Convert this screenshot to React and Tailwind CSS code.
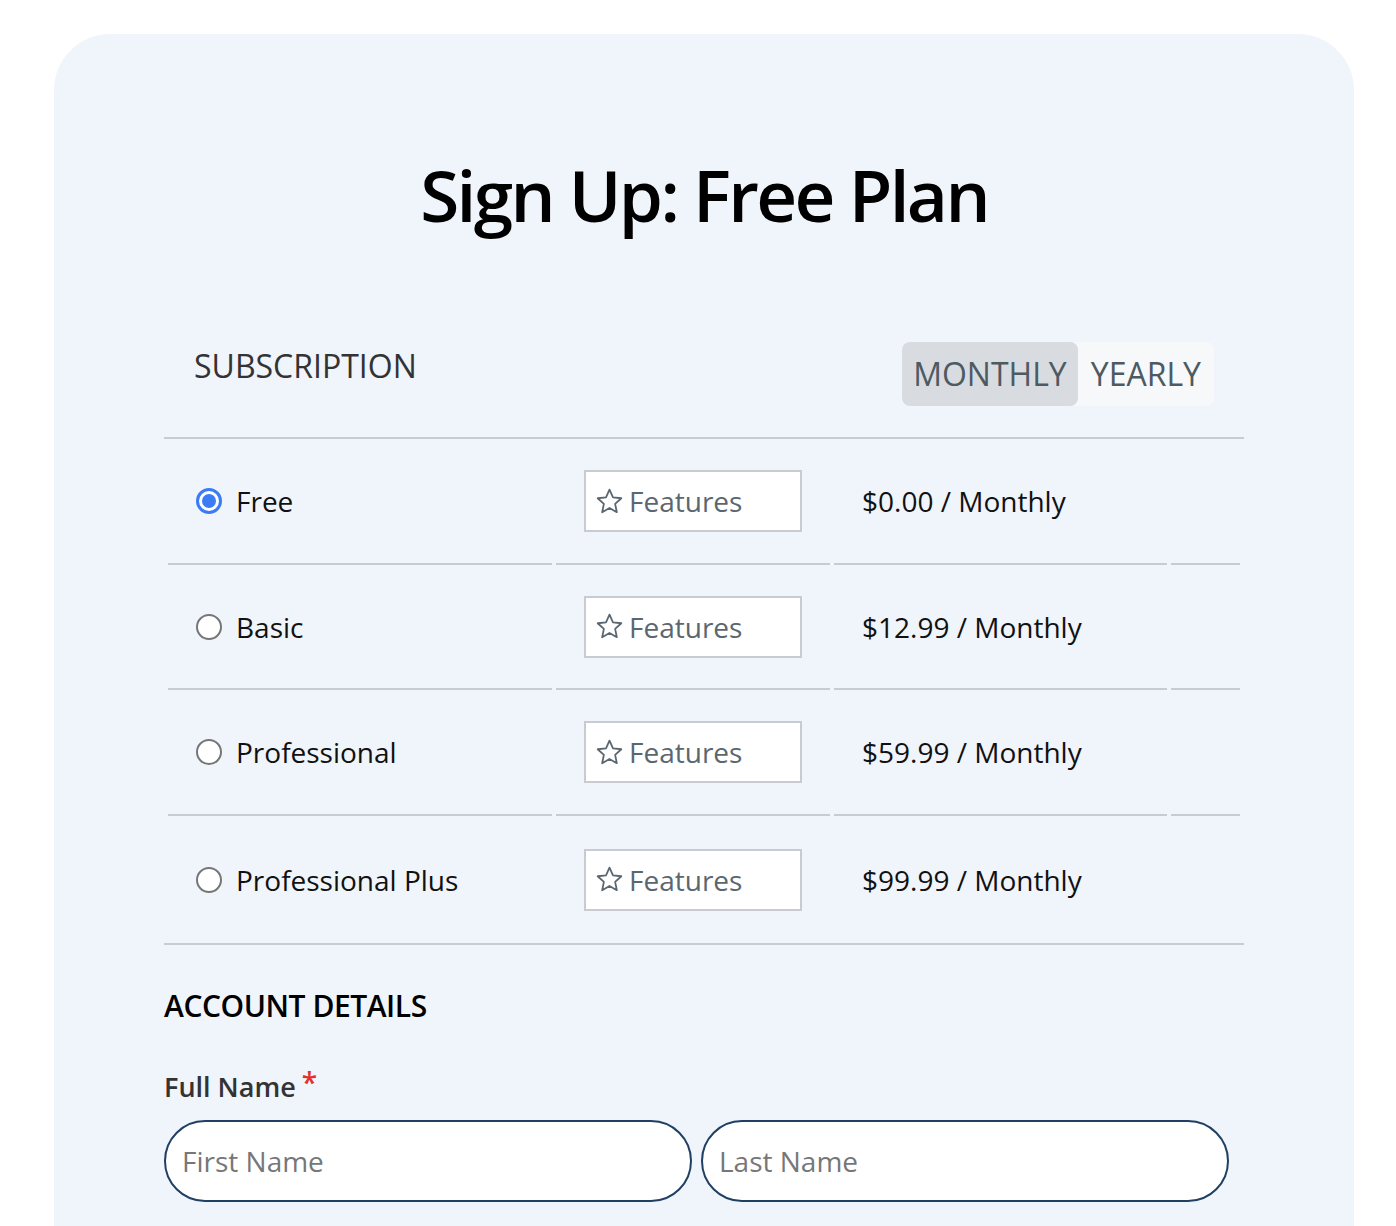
import React, { useState } from 'react';

const plans = [
  { name: 'Free', price: '$0.00', h: 'h-[126px]' },
  { name: 'Basic', price: '$12.99', h: 'h-[125px]' },
  { name: 'Professional', price: '$59.99', h: 'h-[126px]' },
  { name: 'Professional Plus', price: '$99.99', h: 'h-[127px]' },
];

const StarIcon = () => (
  <svg width="27" height="27" viewBox="0 0 24 24" fill="none" stroke="currentColor" strokeWidth="1.6" strokeLinejoin="round">
    <polygon points="12,1.5 15.1,8.3 22.5,9.1 17,14.1 18.5,21.5 12,17.8 5.5,21.5 7,14.1 1.5,9.1 8.9,8.3" />
  </svg>
);

const Radio = ({ checked }) =>
  checked ? (
    <span className="flex h-[26px] w-[26px] items-center justify-center rounded-full border-[3px] border-[#3b7cf5] bg-white">
      <span className="h-[14px] w-[14px] rounded-full bg-[#3b7cf5]" />
    </span>
  ) : (
    <span className="block h-[26px] w-[26px] rounded-full border-2 border-[#767676] bg-white" />
  );

export default function App() {
  const [selected, setSelected] = useState('Free');
  const [period, setPeriod] = useState('monthly');

  return (
    <div className="min-h-screen bg-white" style={{ fontFamily: '"Open Sans", "Noto Sans", sans-serif' }}>
      <div className="ml-[54px] mt-[34px] w-[1300px] rounded-t-[56px] bg-[#f0f4fb] px-[110px] pt-[125px] pb-10">
        <h1 className="text-center text-[71px] leading-none font-semibold tracking-[-0.037em] text-black">
          Sign Up: {selected} Plan
        </h1>

        <div className="mt-[112px] flex items-start justify-between px-[30px] pb-[31px]">
          <h2 className="text-[32px] font-medium text-[#333]">SUBSCRIPTION</h2>
          <div className="flex h-[64px] rounded-lg bg-[#f7f8fa]">
            <button
              onClick={() => setPeriod('monthly')}
              className={`rounded-lg px-[11px] text-[32px] text-[#4e5a62] ${period === 'monthly' ? 'bg-[#d8dce0]' : ''}`}
            >
              MONTHLY
            </button>
            <button
              onClick={() => setPeriod('yearly')}
              className={`rounded-lg px-[13px] text-[32px] text-[#4e5a62] ${period === 'yearly' ? 'bg-[#d8dce0]' : ''}`}
            >
              YEARLY
            </button>
          </div>
        </div>

        <div className="border-y-2 border-[#c8ccd2]">
          <table className="w-full border-separate border-spacing-x-[4px] border-spacing-y-0">
            <tbody>
              {plans.map((p, i) => {
                const last = i === plans.length - 1;
                const cell = `align-middle ${p.h} ${last ? '' : 'border-b-2 border-[#c8ccd2]'}`;
                return (
                  <tr key={p.name}>
                    <td className={`${cell} w-[384px] pl-[28px]`}>
                      <label className="flex cursor-pointer items-center gap-[14px]" onClick={() => setSelected(p.name)}>
                        <Radio checked={selected === p.name} />
                        <span className="text-[28px] text-[#111]">{p.name}</span>
                      </label>
                    </td>
                    <td className={`${cell} w-[274px] pl-[28px]`}>
                      <button className="flex h-[62px] w-[218px] items-center gap-[6px] border-2 border-[#c8ccd2] bg-white pl-[10px] text-[28px] text-[#5b6770]">
                        <StarIcon />
                        Features
                      </button>
                    </td>
                    <td className={`${cell} w-[333px] pl-[28px] text-[28px] text-[#111]`}>
                      {p.price} / {period === 'monthly' ? 'Monthly' : 'Yearly'}
                    </td>
                    <td className={cell}></td>
                  </tr>
                );
              })}
            </tbody>
          </table>
        </div>

        <h2 className="mt-[38px] text-[30px] font-semibold tracking-[-0.015em] text-black">ACCOUNT DETAILS</h2>

        <div className="mt-[39px] flex items-start text-[27px] font-semibold text-[#333]">
          Full Name
          <span className="ml-[6px] text-[28px] leading-[1.1] text-[#e5302a]">*</span>
        </div>

        <div className="mt-[12px] grid w-[1065px] grid-cols-2 gap-[9px]">
          <input
            placeholder="First Name"
            className="h-[82px] rounded-full border-2 border-[#1f3f63] bg-white px-[16px] text-[28px] text-[#111] outline-none placeholder:text-[#777]"
          />
          <input
            placeholder="Last Name"
            className="h-[82px] rounded-full border-2 border-[#1f3f63] bg-white px-[16px] text-[28px] text-[#111] outline-none placeholder:text-[#777]"
          />
        </div>
      </div>
    </div>
  );
}
